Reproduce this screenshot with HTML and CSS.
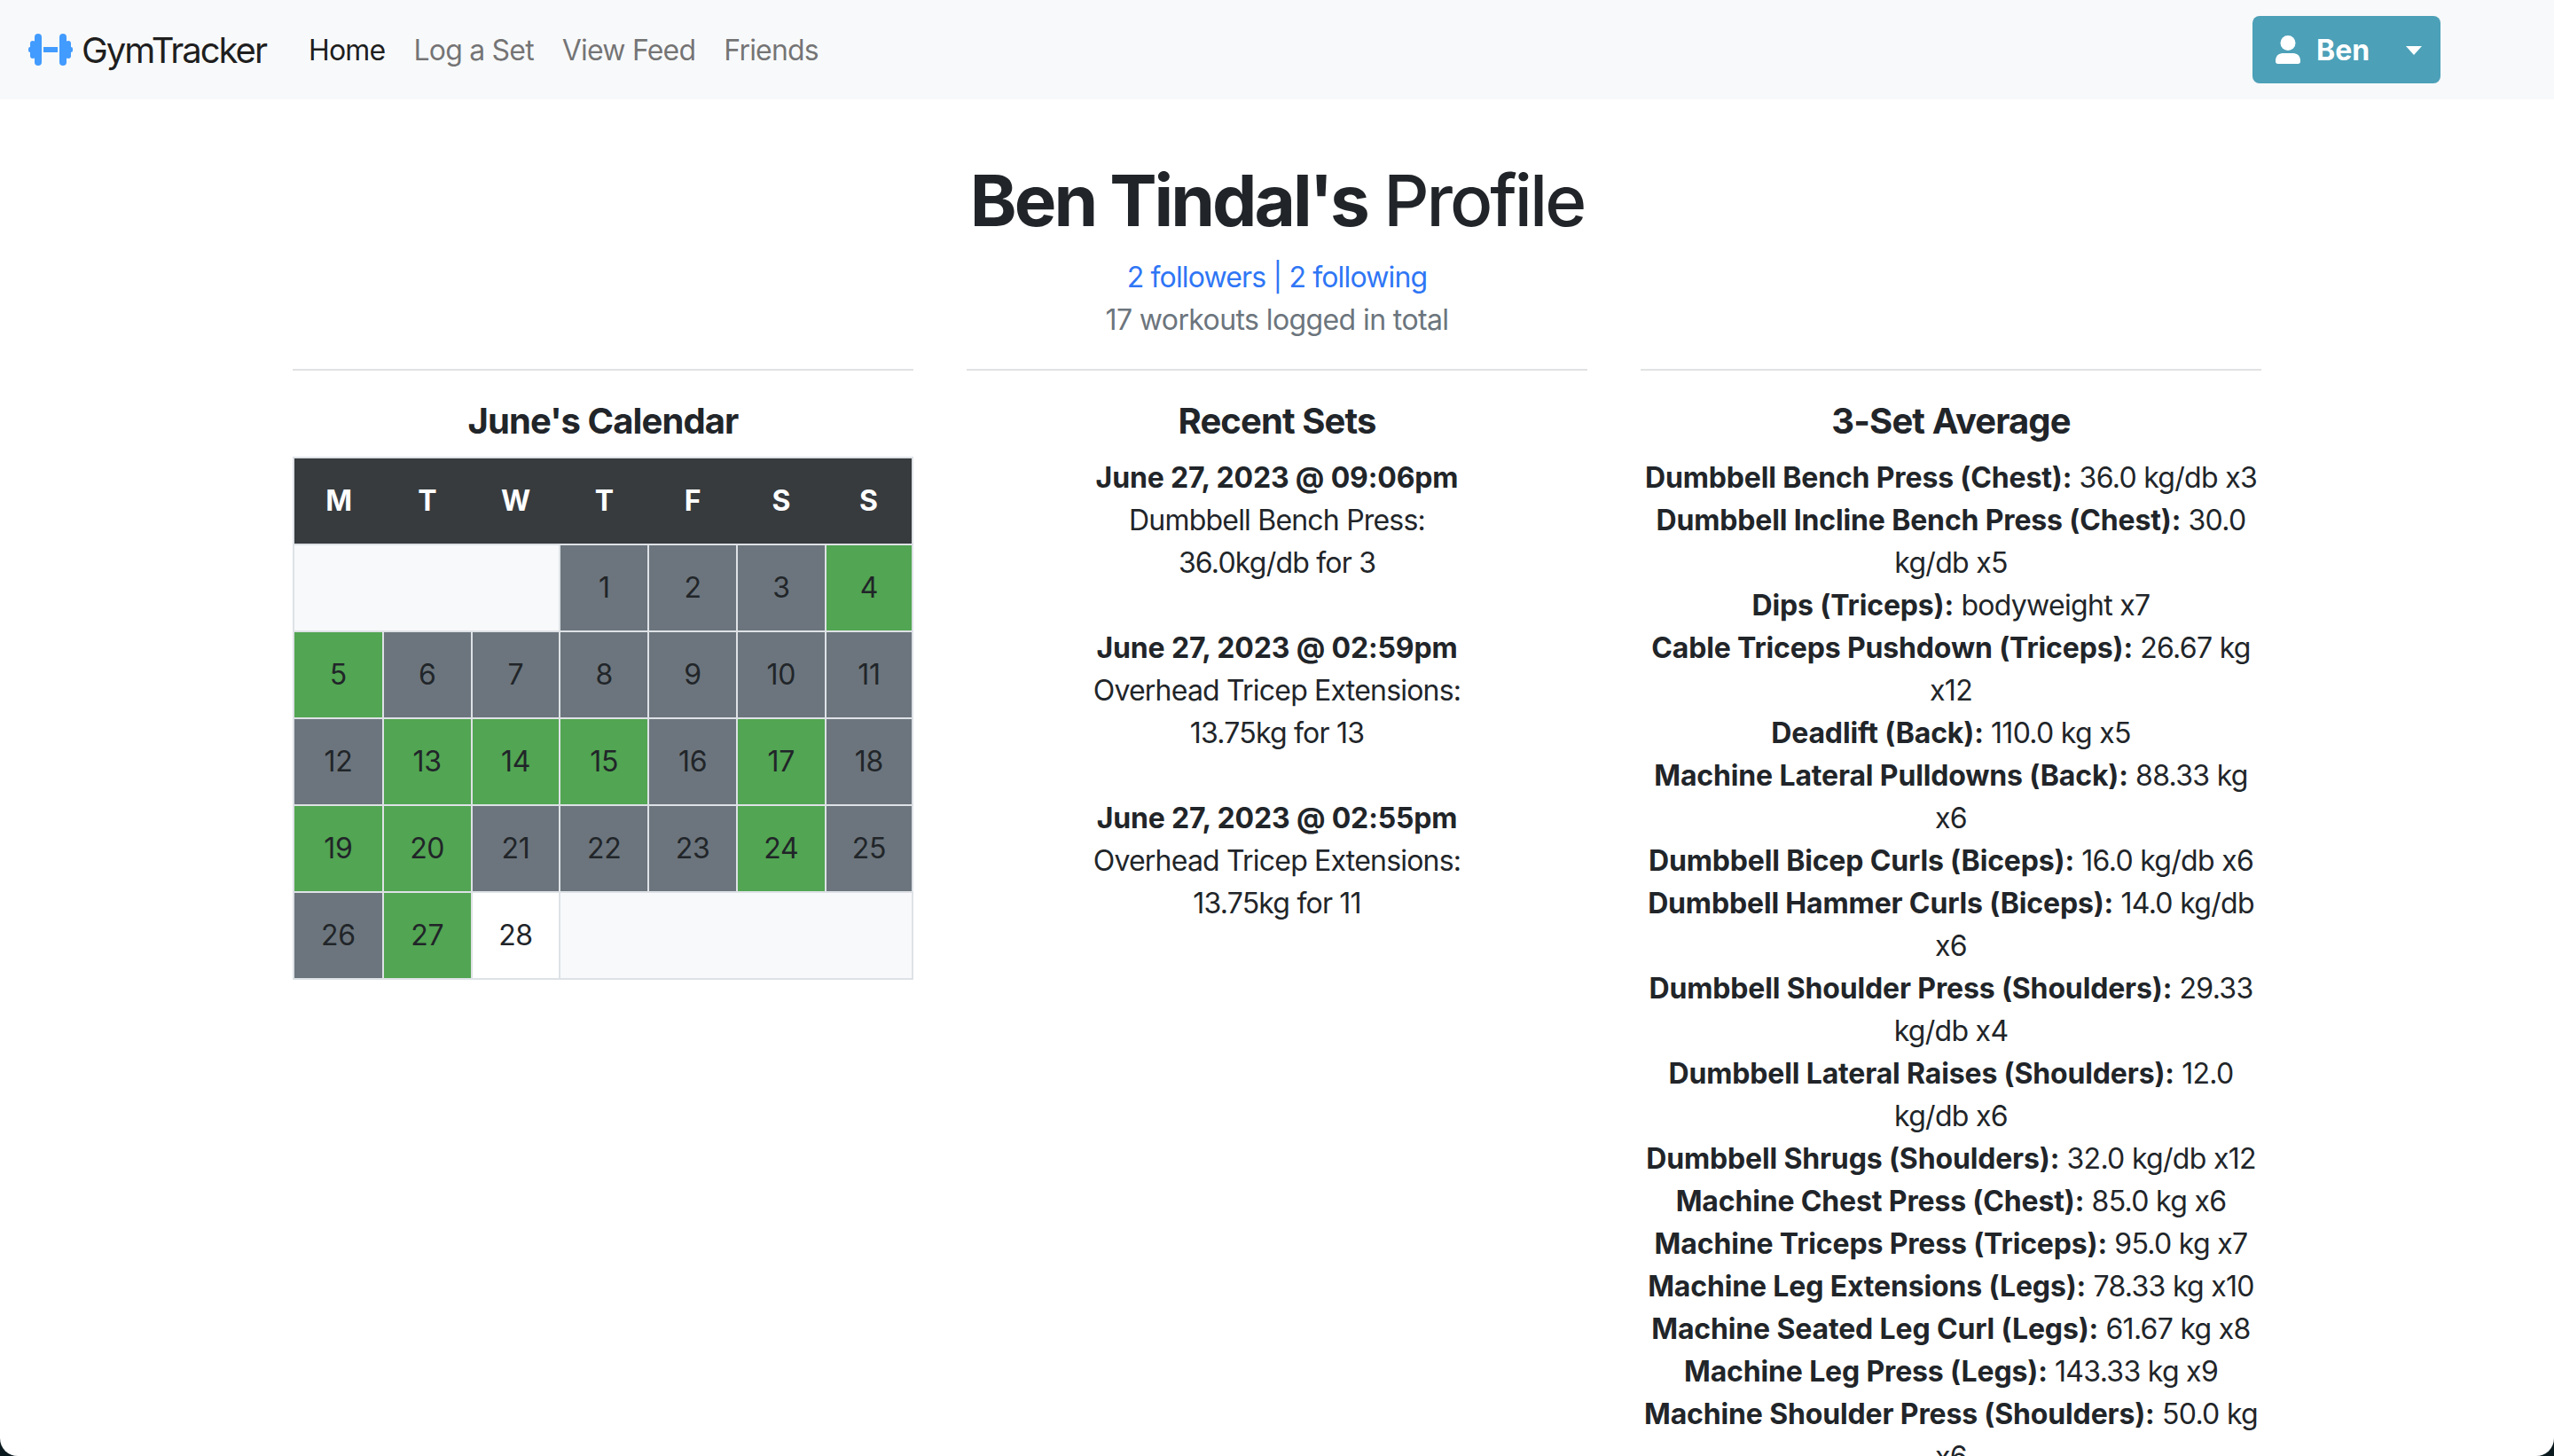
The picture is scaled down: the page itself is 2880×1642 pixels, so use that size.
FILE: index.html
```html
<!DOCTYPE html>
<html lang="en">
<head>
  <meta charset="UTF-8" />
  <title>GymTracker</title>
  <link rel="stylesheet" href="styles.css">
</head>
<body>

  <nav class="navbar">
    <a class="brand" href="#">
      <svg class="brand-icon" viewBox="0 0 50 36" width="50" height="36">
        <rect x="0" y="15" width="4" height="6" rx="2" />
        <rect x="2" y="8" width="6" height="20" rx="3" />
        <rect x="7" y="0" width="8" height="36" rx="4" />
        <rect x="17" y="15" width="16" height="6" />
        <rect x="35" y="0" width="8" height="36" rx="4" />
        <rect x="42" y="8" width="6" height="20" rx="3" />
        <rect x="46" y="15" width="4" height="6" rx="2" />
      </svg>
      <span class="nudge">GymTracker</span>
    </a>
    <ul class="nav-links">
      <li><a class="active" href="#">Home</a></li>
      <li><a href="#">Log a Set</a></li>
      <li><a href="#">View Feed</a></li>
      <li><a href="#">Friends</a></li>
    </ul>
    <div class="user-menu">
      <a class="user-btn" href="#">
        <svg viewBox="0 0 28 32" width="28" height="32">
          <circle cx="14" cy="8.5" r="8.5" />
          <path d="M8 20h12c4.400 0 8 3.600 8 8v1.500c0 1.400-1.100 2.500-2.500 2.500h-23C1.100 32 0 30.900 0 29.500V28c0-4.400 3.600-8 8-8z" />
        </svg>
        <span class="nudge">Ben</span>
      </a>
      <a class="user-caret" href="#"></a>
    </div>
  </nav>

  <main class="container">
    <h1><strong>Ben Tindal's</strong> Profile</h1>
    <p class="follow"><a href="#">2 followers | 2 following</a></p>
    <p class="total">17 workouts logged in total</p>

    <div class="columns">

      <section class="col">
        <hr>
        <h4>June's Calendar</h4>
        <table class="calendar">
          <thead>
            <tr><th>M</th><th>T</th><th>W</th><th>T</th><th>F</th><th>S</th><th>S</th></tr>
          </thead>
          <tbody>
            <tr>
              <td class="blank" colspan="3"></td>
              <td class="rest">1</td><td class="rest">2</td><td class="rest">3</td><td class="done">4</td>
            </tr>
            <tr>
              <td class="done">5</td><td class="rest">6</td><td class="rest">7</td><td class="rest">8</td><td class="rest">9</td><td class="rest">10</td><td class="rest">11</td>
            </tr>
            <tr>
              <td class="rest">12</td><td class="done">13</td><td class="done">14</td><td class="done">15</td><td class="rest">16</td><td class="done">17</td><td class="rest">18</td>
            </tr>
            <tr>
              <td class="done">19</td><td class="done">20</td><td class="rest">21</td><td class="rest">22</td><td class="rest">23</td><td class="done">24</td><td class="rest">25</td>
            </tr>
            <tr>
              <td class="rest">26</td><td class="done">27</td><td>28</td>
              <td class="blank" colspan="4"></td>
            </tr>
          </tbody>
        </table>
      </section>

      <section class="col">
        <hr>
        <h4>Recent Sets</h4>
        <p class="set"><strong>June 27, 2023 @ 09:06pm</strong><br>Dumbbell Bench Press:<br>36.0kg/db for 3</p>
        <p class="set"><strong>June 27, 2023 @ 02:59pm</strong><br>Overhead Tricep Extensions:<br>13.75kg for 13</p>
        <p class="set"><strong>June 27, 2023 @ 02:55pm</strong><br>Overhead Tricep Extensions:<br>13.75kg for 11</p>
      </section>

      <section class="col">
        <hr>
        <h4>3-Set Average</h4>
        <p class="avg"><strong>Dumbbell Bench Press (Chest):</strong> 36.0 kg/db x3</p>
        <p class="avg"><strong>Dumbbell Incline Bench Press (Chest):</strong> 30.0 kg/db x5</p>
        <p class="avg"><strong>Dips (Triceps):</strong> bodyweight x7</p>
        <p class="avg"><strong>Cable Triceps Pushdown (Triceps):</strong> 26.67 kg x12</p>
        <p class="avg"><strong>Deadlift (Back):</strong> 110.0 kg x5</p>
        <p class="avg"><strong>Machine Lateral Pulldowns (Back):</strong> 88.33 kg x6</p>
        <p class="avg"><strong>Dumbbell Bicep Curls (Biceps):</strong> 16.0 kg/db x6</p>
        <p class="avg"><strong>Dumbbell Hammer Curls (Biceps):</strong> 14.0 kg/db x6</p>
        <p class="avg"><strong>Dumbbell Shoulder Press (Shoulders):</strong> 29.33 kg/db x4</p>
        <p class="avg"><strong>Dumbbell Lateral Raises (Shoulders):</strong> 12.0 kg/db x6</p>
        <p class="avg"><strong>Dumbbell Shrugs (Shoulders):</strong> 32.0 kg/db x12</p>
        <p class="avg"><strong>Machine Chest Press (Chest):</strong> 85.0 kg x6</p>
        <p class="avg"><strong>Machine Triceps Press (Triceps):</strong> 95.0 kg x7</p>
        <p class="avg"><strong>Machine Leg Extensions (Legs):</strong> 78.33 kg x10</p>
        <p class="avg"><strong>Machine Seated Leg Curl (Legs):</strong> 61.67 kg x8</p>
        <p class="avg"><strong>Machine Leg Press (Legs):</strong> 143.33 kg x9</p>
        <p class="avg"><strong>Machine Shoulder Press (Shoulders):</strong> 50.0 kg x6</p>
      </section>

    </div>
  </main>

</body>
</html>
```

FILE: styles.css
```css
html {
  background-color: #0b1a1e;
}

body {
  margin: 0;
  height: 100vh;
  overflow: hidden;
  background-color: white;
  border-radius: 0 0 20px 20px;
  font-family: Inter, "Liberation Sans", sans-serif;
  font-size: 32px;
  line-height: 48px;
  letter-spacing: -0.7px;
  color: #212529;
}

a {
  text-decoration: none;
}

p {
  margin: 0;
}

strong {
  letter-spacing: -0.15px;
}

/* Navbar */
.navbar {
  display: flex;
  align-items: center;
  height: 112px;
  padding: 0 128px 0 32px;
  background-color: #f8f9fa;
}

.nudge {
  padding-top: 2px;
}

.brand {
  display: flex;
  align-items: center;
  gap: 10px;
  margin-right: 48px;
  font-size: 40px;
  letter-spacing: -2px;
  color: rgba(0, 0, 0, 0.9);
}

.brand-icon {
  fill: #429bff;
}

.nav-links {
  display: flex;
  gap: 32px;
  flex: 1;
  margin: 0;
  padding: 2px 0 0;
  list-style: none;
  letter-spacing: -0.8px;
}

.nav-links a {
  color: rgba(0, 0, 0, 0.55);
}

.nav-links a.active {
  color: rgba(0, 0, 0, 0.9);
}

.user-menu {
  display: flex;
  width: 212px;
  height: 76px;
  border-radius: 8px;
  background-color: #4ca0b8;
}

.user-btn {
  display: flex;
  align-items: center;
  gap: 18px;
  flex: 1;
  padding-left: 26px;
  font-weight: 700;
  letter-spacing: 0;
  color: white;
}

.user-btn svg {
  fill: white;
}

.user-caret {
  position: relative;
  width: 58px;
}

.user-caret::after {
  content: "";
  position: absolute;
  top: 34px;
  left: 19px;
  border-top: 10px solid white;
  border-left: 9px solid transparent;
  border-right: 9px solid transparent;
}

/* Page */
.container {
  width: 2280px;
  margin: 0 auto;
  text-align: center;
}

h1 {
  margin: 66px 0 15px;
  font-size: 80px;
  line-height: 96px;
  font-weight: 500;
  letter-spacing: -3px;
}

h1 strong {
  font-weight: 700;
  letter-spacing: -3px;
}

.follow a {
  letter-spacing: -0.85px;
  color: #2f76f5;
}

.total {
  letter-spacing: -0.6px;
  color: #6c757d;
}

.columns {
  display: grid;
  grid-template-columns: repeat(3, 760px);
}

.col {
  padding: 0 30px;
}

hr {
  height: 2px;
  margin: 31px 0 33px;
  border: none;
  background-color: #e1e2e3;
}

h4 {
  margin: 0 0 16px;
  font-size: 40px;
  line-height: 48px;
  font-weight: 700;
  letter-spacing: -0.9px;
}

/* Calendar */
.calendar {
  width: 100%;
  table-layout: fixed;
  border-collapse: collapse;
  border: 2px solid #dee2e6;
  letter-spacing: -0.3px;
}

.calendar th {
  height: 96px;
  padding: 0;
  background-color: #373b3e;
  color: white;
  border-bottom: 2px solid #dee2e6;
}

.calendar th:not(:last-child) {
  width: 99.8px;
}

.calendar td {
  height: 96px;
  padding: 0;
  border: 2px solid #dee2e6;
}

.calendar .rest {
  background-color: #6c757d;
}

.calendar .done {
  background-color: #52a552;
}

.calendar .blank {
  background-color: #f8f9fa;
}

.set {
  margin-bottom: 48px;
  letter-spacing: -0.8px;
}
```
